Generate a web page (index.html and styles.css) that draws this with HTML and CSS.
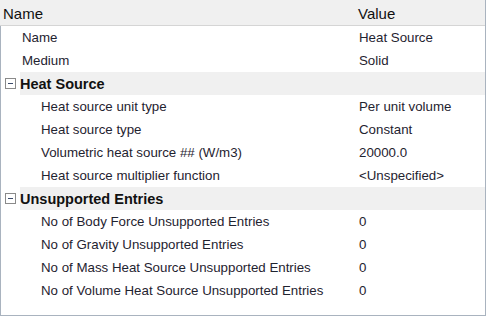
FILE: index.html
```html
<!DOCTYPE html>
<html>
<head>
<meta charset="utf-8">
<link rel="stylesheet" href="styles.css">
</head>
<body>
<div class="panel">
  <div class="head">
    <div class="hname">Name</div>
    <div class="hval">Value</div>
  </div>
  <div class="body">
    <div class="row l1"><span class="k">Name</span><span class="v">Heat Source</span></div>
    <div class="row l1"><span class="k">Medium</span><span class="v">Solid</span></div>
    <div class="row grp"><span class="exp"></span><span class="gk">Heat Source</span></div>
    <div class="row l2"><span class="k">Heat source unit type</span><span class="v">Per unit volume</span></div>
    <div class="row l2"><span class="k">Heat source type</span><span class="v">Constant</span></div>
    <div class="row l2"><span class="k">Volumetric heat source ## (W/m3)</span><span class="v">20000.0</span></div>
    <div class="row l2"><span class="k">Heat source multiplier function</span><span class="v">&lt;Unspecified&gt;</span></div>
    <div class="row grp"><span class="exp"></span><span class="gk">Unsupported Entries</span></div>
    <div class="row l2"><span class="k">No of Body Force Unsupported Entries</span><span class="v">0</span></div>
    <div class="row l2"><span class="k">No of Gravity Unsupported Entries</span><span class="v">0</span></div>
    <div class="row l2"><span class="k">No of Mass Heat Source Unsupported Entries</span><span class="v">0</span></div>
    <div class="row l2"><span class="k">No of Volume Heat Source Unsupported Entries</span><span class="v">0</span></div>
  </div>
</div>
</body>
</html>
```
FILE: styles.css
```css
html, body { margin: 0; padding: 0; background: #fff; }
body {
  font-family: "Liberation Sans", Arial, sans-serif;
  font-size: 13.3px;
  color: #1f2330;
}
.panel {
  width: 486px;
  height: 316px;
  display: flex;
  flex-direction: column;
  box-sizing: border-box;
  border-right: 1px solid #a9b3bf;
}
.head {
  height: 25px;
  background: #f0f0f0;
  border-bottom: 1px solid #d5d5d5;
  display: grid;
  grid-template-columns: 358px 1fr;
  align-items: center;
  font-size: 15px;
  color: #111;
  flex: none;
}
.hname { padding-left: 3px; padding-top: 1px; }
.hval { padding-top: 1px; }
.body {
  flex: 1;
  border-left: 1px solid #a9b3bf;
  border-bottom: 1px solid #a9b3bf;
}
.row {
  height: 23px;
  display: grid;
  grid-template-columns: 358px 1fr;
  align-items: center;
}
.l1 .k { padding-left: 21px; }
.l2 .k { padding-left: 40px; }
.grp {
  grid-template-columns: 19px 1fr;
  background: linear-gradient(to right, #fff 19px, #f0f0f0 19px);
}
.gk { font-weight: bold; font-size: 14.5px; color: #111; }
.exp {
  position: relative;
  width: 11px;
  height: 11px;
  margin-left: 4px;
  border: 1px solid #8a8a8a;
  box-sizing: border-box;
  background: #fff;
}
.exp::after {
  content: "";
  position: absolute;
  left: 2px;
  right: 2px;
  top: 4px;
  height: 1px;
  background: #3c4b6b;
}
```
